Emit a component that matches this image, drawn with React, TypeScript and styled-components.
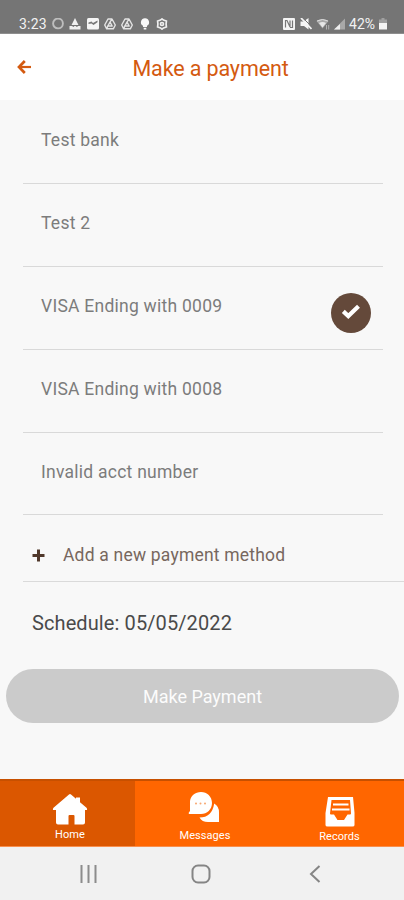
import React from "react";
import styled, { createGlobalStyle } from "styled-components";

const GlobalStyle = createGlobalStyle`
  * { box-sizing: border-box; }
  body { margin: 0; background: #f8f8f8; font-family: Roboto, "Liberation Sans", sans-serif; }
  button { font-family: inherit; border: 0; padding: 0; margin: 0; background: none; }
  svg { display: block; flex: none; }
`;

const Screen = styled.div`
  width: 404px;
  height: 900px;
  display: flex;
  flex-direction: column;
  overflow: hidden;
  background: #f8f8f8;
`;

const StatusBar = styled.div`
  height: 34px;
  flex: none;
  display: flex;
  justify-content: space-between;
  padding: 16px 17px 0 19px;
  background: #757575;
  border-bottom: 1px solid #8e8e8e;
  color: #f2f2f2;
`;

const StatusGroup = styled.div<{ $gap: number }>`
  display: flex;
  align-items: center;
  height: 15px;
  gap: ${(p) => p.$gap}px;
`;

const StatusText = styled.span<{ $spacing: number }>`
  font-size: 14px;
  line-height: 15px;
  padding-top: 1px;
  letter-spacing: ${(p) => p.$spacing}px;
`;

const Header = styled.header`
  height: 66px;
  flex: none;
  display: grid;
  grid-template-columns: 48px 1fr 32px;
  align-items: center;
  background: #fff;
`;

const BackButton = styled.button`
  height: 24px;
  padding: 0 0 0 17px;
  display: flex;
  align-items: center;
`;

const Title = styled.h1`
  margin: 3px 0 0;
  text-align: center;
  font-size: 21.5px;
  line-height: 26px;
  font-weight: 400;
  letter-spacing: -0.12px;
  padding-left: 1px;
  color: #d45a10;
`;

const Content = styled.main`
  flex: 1;
  display: flex;
  flex-direction: column;
`;

const MethodList = styled.ul`
  list-style: none;
  margin: 0 21px 0 23px;
  padding: 1px 0 0;
`;

const MethodRow = styled.li`
  height: 82.9px;
  display: flex;
  justify-content: space-between;
  padding: 28px 12px 0 18px;
  border-bottom: 1px solid #d9d9d9;
`;

const MethodName = styled.span`
  font-size: 17.5px;
  line-height: 22px;
  letter-spacing: 0.25px;
  color: #7c7c7c;
`;

const CheckBadge = styled.span`
  width: 40px;
  height: 40px;
  margin-top: -2px;
  border-radius: 50%;
  background: #64493a;
  display: flex;
  align-items: center;
  justify-content: center;
`;

const AddMethod = styled.button`
  height: 66.5px;
  margin-left: 23px;
  padding: 14px 0 0 9px;
  display: flex;
  align-items: center;
  gap: 18px;
  text-align: left;
  border-bottom: 1px solid #dadada;
  font-size: 17.5px;
  letter-spacing: 0.2px;
  color: #77675e;
`;

const Schedule = styled.p`
  margin: 28px 0 0 32px;
  font-size: 20px;
  line-height: 26px;
  letter-spacing: 0.1px;
  color: #4a4a4a;
`;

const PayButton = styled.button`
  height: 54px;
  margin: 33.5px 5px 0 6px;
  border-radius: 27px;
  background: #cbcbcb;
  color: #fcfcfc;
  font-size: 18px;
  padding-top: 1px;
  letter-spacing: 0;
`;

const TabBar = styled.nav`
  height: 68px;
  flex: none;
  display: grid;
  grid-template-columns: 135px 135px 134px;
  background: #ff6600;
  border-top: 2px solid #c75000;
  border-bottom: 1px solid #f98f4d;
`;

const Tab = styled.button<{ $active?: boolean; $top: number; $gap: number }>`
  display: flex;
  flex-direction: column;
  align-items: center;
  padding: ${(p) => p.$top}px 0 0 5px;
  gap: ${(p) => p.$gap}px;
  background: ${(p) => (p.$active ? "#db5700" : "transparent")};
  color: #fff;
  font-size: 11px;
  line-height: 13px;
  letter-spacing: 0.05px;
`;

const SystemBar = styled.div`
  height: 53px;
  flex: none;
  display: grid;
  grid-template-columns: 111px 118px 12px;
  align-items: center;
  padding: 1px 0 0 80px;
  background: #f1f1f1;
`;

const methods = ["Test bank", "Test 2", "VISA Ending with 0009", "VISA Ending with 0008", "Invalid acct number"];
const selected = 2;

const DriveIcon = () => (
  <svg width="12" height="12" viewBox="0 0 12 12" fill="none" stroke="#e4e4e4" strokeWidth="1.4" strokeLinejoin="round">
    <path d="M4 1h4l3.3 6-2 3.8H2.7L.7 7zM6 4.2 3.8 8h4.4zM6 4.2 8 1M3.8 8 2.7 10.8" />
  </svg>
);

export default function App() {
  return (
    <>
      <GlobalStyle />
      <Screen>
        <StatusBar>
          <StatusGroup $gap={5.3}>
            <StatusText $spacing={0.2}>3:23</StatusText>
            <svg width="12" height="12" viewBox="0 0 12 12"><circle cx="6" cy="5.500" r="4.900" fill="none" stroke="#bebebe" strokeWidth="1.900" /></svg>
            <svg width="12" height="12" viewBox="0 0 12 12" fill="#f0f0f0"><path d="M6 0 9.500 7h-7zM.5 8h2.500l1.500 1L5.500 8h1L8 9l1-1h2.500v3.500H.5z" /></svg>
            <svg width="12" height="12" viewBox="0 0 12 12"><rect width="12" height="11.500" rx="1.500" fill="#f5f5f5" /><path d="M1.500 6V4.500l3-1L6 5l4.500-2.500v1.800L6.500 7 4.500 5.500z" fill="#777" /></svg>
            <DriveIcon />
            <DriveIcon />
            <svg width="12" height="12" viewBox="0 0 12 12" fill="#f8f8f8"><path d="M6 .2a4 4 0 0 0-2 7.500V9h4V7.700A4 4 0 0 0 6 .2M4.700 9.700h2.600v1.800H4.700z" /></svg>
            <svg width="12" height="12" viewBox="0 0 12 12" fill="none" stroke="#eee" strokeWidth="1.700"><path d="m6 .9 1.500 1.200 2.900.9-.3 3 .3 3-2.900.9L6 11.100 4.500 9.900 1.600 9l.3-3-.3-3 2.900-.9z" /><circle cx="6" cy="6" r="1.500" /></svg>
          </StatusGroup>
          <StatusGroup $gap={4.2}>
            <svg width="12" height="12" viewBox="0 0 12 12"><rect width="12" height="12" rx="1" fill="#f4f4f4" /><path d="M2.500 9.500v-7h1.500l3 6.500V2.500M9.500 2.500v7H7" fill="none" stroke="#777" strokeWidth="1.200" /></svg>
            <svg width="12" height="12" viewBox="0 0 12 12"><path d="M.5 3.500h3L8.500 0v11.500L4 8H.5z" fill="#f5f5f5" /><path d="m2.500-.5 10 10" stroke="#757575" strokeWidth="1" /><path d="m1 0 10.500 11" stroke="#f5f5f5" strokeWidth="1.800" /></svg>
            <svg width="14" height="12" viewBox="0 0 14 12"><path d="M.5 3Q6.500-1 12.500 3L6.500 10.500z" fill="#aaa" /><path d="M3 5q3.500-2 7 0L6.500 9.500z" fill="#e8e8e8" /><path d="M1 3q5.500-3 11 0" fill="none" stroke="#ddd" /><path d="M10.500 7v4.500M12.700 7v4.500" stroke="#b0b0b0" /></svg>
            <svg width="11" height="12" viewBox="0 0 11 12"><path d="M11 .5v11H0z" fill="#a8a8a8" /><path d="M6 6v5.500H0z" fill="#eee" /></svg>
            <StatusText $spacing={-0.1}>42%</StatusText>
            <svg width="8" height="12" viewBox="0 0 8 12"><path d="M2.500 0h3v1.500H8v4H0v-4h2.500z" fill="#a0a0a0" /><path d="M0 5h8v6.500H0z" fill="#f5f5f5" /></svg>
          </StatusGroup>
        </StatusBar>
        <Header>
          <BackButton aria-label="Back">
            <svg width="15" height="14" viewBox="0 0 15 14" fill="none" stroke="#d45a10" strokeWidth="2.700"><path d="M7.800 1 2 7l5.800 6" /><path d="M2.500 7H14" strokeWidth="2.200" /></svg>
          </BackButton>
          <Title>Make a payment</Title>
        </Header>
        <Content>
          <MethodList>
            {methods.map((name, i) => (
              <MethodRow key={name}>
                <MethodName>{name}</MethodName>
                {i === selected && (
                  <CheckBadge>
                    <svg width="20" height="18" viewBox="0 0 20 18"><path d="m2.300 7.400 5 4.700L17.500 2.300" fill="none" stroke="#fff" strokeWidth="4.200" /></svg>
                  </CheckBadge>
                )}
              </MethodRow>
            ))}
          </MethodList>
          <AddMethod>
            <svg width="13" height="13" viewBox="0 0 13 13"><path d="M6.500.5v12M.5 6.500h12" stroke="#50382b" strokeWidth="3" /></svg>
            Add a new payment method
          </AddMethod>
          <Schedule>Schedule: 05/05/2022</Schedule>
          <PayButton>Make Payment</PayButton>
        </Content>
        <TabBar>
          <Tab $active $top={12} $gap={2}>
            <svg width="36" height="33" viewBox="0 0 36 33"><path d="M17 1.500q1-.8 2 0l5 4.300V4.500h4v4.700l6.500 5.500q1.500 2.300-.5 2.300h-1v12.500q0 2-2 2h-8.500V23q0-1-1-1h-4q-1 0-1 1v8.500H6q-2 0-2-2V17H2q-2 0-.5-2.300z" fill="#fff" /></svg>
            Home
          </Tab>
          <Tab $top={10} $gap={5}>
            <svg width="34" height="33" viewBox="0 0 34 33" fill="#fff">
              <path d="M26.200 12.500q5 3 4.800 9v9.500H20q-6 0-8.500-4.500 12.500 0 14.700-14z" />
              <path d="M13 1C19 1 24 5.500 24 12S19 23 13 23H.8v-1.500L2 20V10C3 4.500 7 1 13 1z" />
              <g fill="#f7a66f"><circle cx="8" cy="12.500" r="1" /><circle cx="12.500" cy="12.500" r="1" /><circle cx="17" cy="12.500" r="1" /></g>
            </svg>
            Messages
          </Tab>
          <Tab $top={15} $gap={2}>
            <svg width="32" height="32" viewBox="0 0 32 32"><path d="M4 1h25l1.500 16v12q0 1.500-2 1.500h-25q-2 0-2-1.500V17z" fill="#fff" /><path d="M7.500 4h18.500l1 13.500q0 1-1 1h-2.500l-3.500 5.500h-6.500l-3.500-5.500H7q-1 0-1-1z" fill="#ff6600" /><path d="M9 8.500h15.500M8 13.500h17.500" stroke="#fff" strokeWidth="2.200" /></svg>
            Records
          </Tab>
        </TabBar>
        <SystemBar>
          <svg width="17" height="18" viewBox="0 0 17 18"><path d="M1.500 0v18M8.500 0v18M15.500 0v18" stroke="#8c8c8c" strokeWidth="2" /></svg>
          <svg width="20" height="20" viewBox="0 0 20 20"><rect x="1.500" y="1.500" width="17" height="17" rx="5.500" fill="none" stroke="#858585" strokeWidth="2" /></svg>
          <svg width="12" height="18" viewBox="0 0 12 18"><path d="M10.500 1 2 9l8.500 8" fill="none" stroke="#858585" strokeWidth="2" /></svg>
        </SystemBar>
      </Screen>
    </>
  );
}
